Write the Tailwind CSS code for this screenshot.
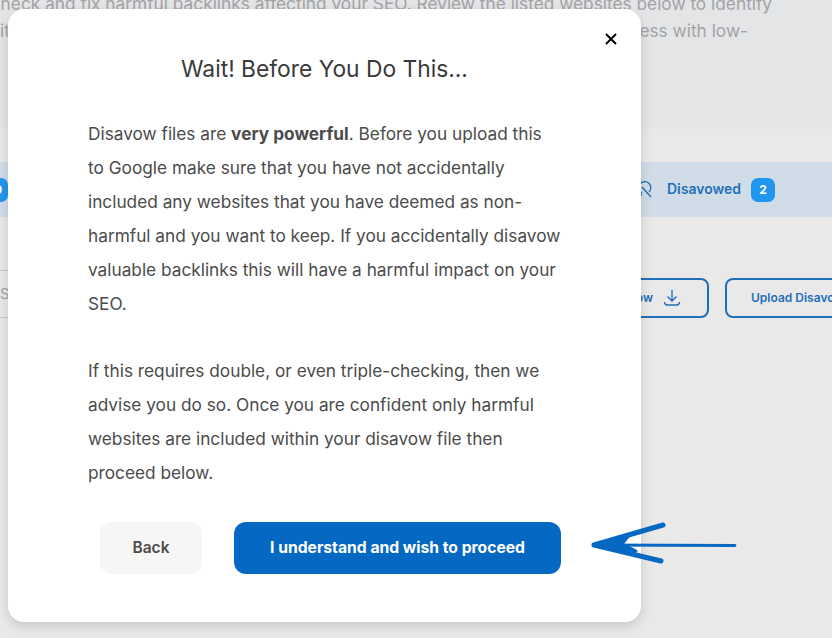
<!DOCTYPE html>
<html lang="en">
<head>
  <meta charset="UTF-8">
  <title>Disavow</title>
  <script src="https://cdn.jsdelivr.net/npm/@tailwindcss/browser@4"></script>
</head>
<body class="font-['Inter',sans-serif]">
  <div class="relative w-[832px] h-[638px] overflow-hidden bg-[#e9e9e9]">
    <!-- Page behind the overlay -->
    <section class="h-[129px] bg-[#e4e5e7] overflow-hidden text-[#a3a3a5] text-[17.3px] leading-[27px] whitespace-nowrap">
      <p class="-mt-[10px] -ml-[12px]">Check and fix harmful backlinks affecting your SEO. Review the listed websites below to identify</p>
      <p class="flex justify-between w-[748px]"><span>it</span><span>ess with low-</span></p>
    </section>
    <div class="mt-[33px] h-[55px] bg-[#d0dce8] flex items-center">
      <span class="-ml-[16px] w-[24px] h-[24px] rounded-[7px] bg-[#2196ee] text-white text-[12px] font-bold flex items-center justify-end pr-[6px]">0</span>
      <svg class="ml-[628px] w-[20px] h-[20px] text-[#1f6fb8]" viewBox="0 0 20 20" fill="none" stroke="currentColor" stroke-width="1.3"><path d="M6 13a6 6 0 1 1 7 -1M6 7l9 10M2 18l4-4"/></svg>
      <span class="ml-[11px] text-[14px] leading-[18px] -mt-[2px] font-semibold text-[#1f6fb8]">Disavowed</span>
      <span class="ml-[10px] w-[24px] h-[24px] rounded-[7px] bg-[#2196ee] text-white text-[12px] font-bold flex items-center justify-center">2</span>
    </div>
    <div class="mt-[53px] h-[48px] flex items-center">
      <div class="w-[8px] h-[48px] shrink-0 border-y border-[#cdcdcd] text-[#a3a3a5] text-[15px] leading-[46px] overflow-hidden">S</div>
      <button class="ml-[500px] w-[201px] h-[40px] shrink-0 mt-[8px] rounded-[8px] border-2 border-[#1f6fb8] text-[#1f6fb8] text-[12px] font-semibold flex items-center justify-end pr-[26px] gap-[10px]">
        <span>ow</span>
        <svg class="w-[18px] h-[18px]" viewBox="0 0 18 18" fill="none" stroke="currentColor" stroke-width="1.3"><path d="M9 1v11M4.500 7.500L9 12l4.500-4.500M1.500 13c0 2 1 3 3 3h9c2 0 3-1 3-3"/></svg>
      </button>
      <button class="ml-[16px] w-[160px] shrink-0 h-[40px] mt-[8px] rounded-[8px] border-2 border-[#1f6fb8] text-[#1f6fb8] text-[12px] font-semibold text-left pl-[24px] whitespace-nowrap">Upload Disavow File</button>
    </div>

    <!-- Modal -->
    <div class="absolute left-[8px] top-[9px] w-[633px] h-[613px] bg-white rounded-[16px] shadow-[0_4px_12px_rgba(0,0,0,0.15)] px-[80px] pt-[45px] text-[#4b4b4b]">
      <button class="absolute right-[22px] top-[22px] w-[16px] h-[16px] text-black" aria-label="Close">
        <svg viewBox="0 0 16 16" fill="none" stroke="currentColor" stroke-width="2"><path d="M3 3l10 10M13 3L3 13"/></svg>
      </button>
      <h2 class="text-[22.8px] leading-[30px] text-center text-[#3a3a3a] font-normal -mx-[40px]">Wait! Before You Do This...</h2>
      <div class="mt-[33px] text-[17.25px] leading-[34px] whitespace-nowrap">
        <p>Disavow files are <strong class="font-bold">very powerful</strong>. Before you upload this<br>to Google make sure that you have not accidentally<br>included any websites that you have deemed as non-<br>harmful and you want to keep. If you accidentally disavow<br>valuable backlinks this will have a harmful impact on your<br>SEO.</p>
        <p class="mt-[33px]">If this requires double, or even triple-checking, then we<br>advise you do so. Once you are confident only harmful<br>websites are included within your disavow file then<br>proceed below.</p>
      </div>
      <div class="mt-[32px] flex gap-[32px] justify-end">
        <button class="w-[102px] h-[52px] rounded-[12px] bg-[#f7f6f4] text-[15.5px] font-semibold text-[#4b4b4b] pb-[1px]">Back</button>
        <button class="w-[327px] h-[52px] rounded-[12px] bg-[#0569c3] text-[15.7px] font-bold text-white pb-[1px]">I understand and wish to proceed</button>
      </div>
    </div>

    <!-- Hand-drawn arrow annotation -->
    <svg class="absolute left-[590px] top-[520px] w-[150px] h-[50px]" viewBox="0 0 150 50" fill="none" stroke="#0569c3" stroke-linecap="round" stroke-linejoin="round">
      <path d="M5 25L145 25.500" stroke-width="3"/>
      <path d="M4 25L73 5M4 25L71 41" stroke-width="5"/>
      <path d="M4 25L40 14L32 24L46 31Z" fill="#0569c3" stroke-width="3"/>
    </svg>
  </div>
</body>
</html>
